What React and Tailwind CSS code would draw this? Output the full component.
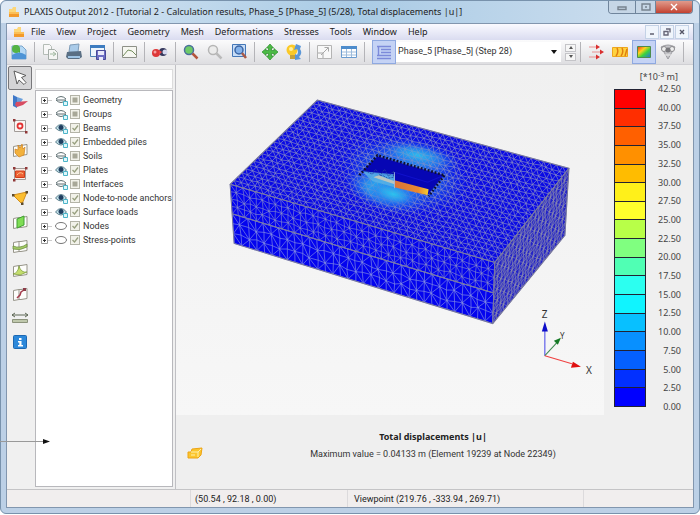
import React from "react";

/* ---------- finite element model ---------- */

const TOP = [[317, 100], [568, 168], [494, 262], [230, 184]];
const FRONT = [[230, 184], [494, 262], [492, 323], [234, 243]];
const SIDE = [[494, 262], [568, 168], [564, 235], [492, 323]];

function noise(i, j) {
  const v = Math.sin(i * 127.1 + j * 311.7) * 43758.5453;
  return v - Math.floor(v) - 0.5;
}

function meshPath(quad, cols, rows, jitter, cross) {
  const at = (i, j) => {
    const inner = i > 0 && j > 0 && i < cols && j < rows;
    const u = (i + (inner ? noise(i, j) * jitter : 0)) / cols;
    const v = (j + (inner ? noise(j + 9, i + 4) * jitter : 0)) / rows;
    return [0, 1].map(
      (k) =>
        (1 - u) * (1 - v) * quad[0][k] +
        u * (1 - v) * quad[1][k] +
        u * v * quad[2][k] +
        (1 - u) * v * quad[3][k]
    );
  };
  const line = (a, b) =>
    `M${a[0].toFixed(1)} ${a[1].toFixed(1)}L${b[0].toFixed(1)} ${b[1].toFixed(1)}`;
  let d = "";
  for (let j = 0; j <= rows; j++) {
    for (let i = 0; i <= cols; i++) {
      if (i < cols) d += line(at(i, j), at(i + 1, j));
      if (j < rows) d += line(at(i, j), at(i, j + 1));
      if (i < cols && j < rows) {
        const even = (i + j) % 2 === 0;
        if (!cross || even) d += line(at(i, j), at(i + 1, j + 1));
        else d += line(at(i + 1, j), at(i, j + 1));
      }
    }
  }
  return d;
}

const lerp = (a, b, t) => [a[0] + (b[0] - a[0]) * t, a[1] + (b[1] - a[1]) * t];
const pts = (quad) => quad.map((p) => p.join(",")).join(" ");

const FL = lerp(FRONT[0], FRONT[3], 0.5);
const FR = lerp(FRONT[1], FRONT[2], 0.5);
const topMesh = meshPath(TOP, 40, 22, 0.3, false);
const frontUpper = meshPath([FRONT[0], FRONT[1], FR, FL], 42, 4, 0.3, true);
const frontLower = meshPath([FL, FR, FRONT[2], FRONT[3]], 34, 3, 0.3, true);
const sideMesh = meshPath(SIDE, 20, 10, 0.3, true);

function Model() {
  return (
    <svg viewBox="176 65 427 349" className="block w-full" role="img" aria-label="Total displacements model">
      <defs>
        <radialGradient id="heat">
          <stop offset="0" stopColor="#2cc9ee" />
          <stop offset="0.5" stopColor="#2a96ee" stopOpacity="0.8" />
          <stop offset="1" stopColor="#1030f4" stopOpacity="0" />
        </radialGradient>
        <linearGradient id="beam">
          <stop offset="0" stopColor="#d9733a" />
          <stop offset="0.7" stopColor="#e88a30" />
          <stop offset="1" stopColor="#f5cf30" />
        </linearGradient>
      </defs>
      <polygon points={pts(TOP)} fill="#0a0ae4" />
      <ellipse cx="404" cy="174" rx="68" ry="40" fill="url(#heat)" opacity="0.7" transform="rotate(12 404 174)" />
      <ellipse cx="418" cy="156" rx="44" ry="15" fill="url(#heat)" opacity="0.85" transform="rotate(12 418 156)" />
      <ellipse cx="386" cy="190" rx="44" ry="22" fill="url(#heat)" transform="rotate(16 386 190)" />
      <path d={topMesh} stroke="#9094c0" strokeWidth="0.8" opacity="0.8" fill="none" />
      <ellipse cx="383" cy="189" rx="38" ry="17" fill="url(#heat)" opacity="0.5" transform="rotate(14 383 189)" />
      <ellipse cx="393" cy="194" rx="24" ry="11" fill="url(#heat)" opacity="0.8" transform="rotate(14 393 194)" />
      <ellipse cx="416" cy="154" rx="34" ry="10" fill="url(#heat)" opacity="0.4" transform="rotate(10 416 154)" />
      <polygon points="377,156 443,175 427,195 394,186 394,176 362,171" fill="#0606b4" />
      <path d="M394 172 427 182 441 176" stroke="#1010cc" strokeWidth="1" fill="none" />
      <polygon points="362,171 394,174 394,187 372,181" fill="#58b4e6" opacity="0.75" />
      <path d="m364 170 8 4 3-5 5 6 4-6 4 7 5-5v6l-6 1-5-3-6 1" fill="none" stroke="#23409c" strokeWidth="0.8" strokeDasharray="2 1" />
      <path d="m373 177 21 7v-3l-16-6z" fill="#b9c4bf" />
      <polygon points="394,180 428,189 427,195 394,187" fill="url(#beam)" />
      <path d="m359 175 18-20 67 20-16 21" fill="none" stroke="#10102c" strokeWidth="2.4" strokeDasharray="1.8 1.8" />
      <path d="M394 172v16" stroke="#a8bfe0" strokeWidth="0.8" />

      <polygon points={pts(FRONT)} fill="#0404ee" />
      <path d={frontUpper} stroke="#8f95c8" strokeWidth="0.7" opacity="0.85" fill="none" />
      <path d={frontLower} stroke="#8c98e0" strokeWidth="0.7" opacity="0.9" fill="none" />
      <polygon points={pts(SIDE)} fill="#2222c8" />
      <path d={sideMesh} stroke="#9090ac" strokeWidth="0.8" opacity="0.8" fill="none" />
      <path
        d={`M230 184 317 100 568 168 494 262ZM230 184 234 243 492 323 564 235 568 168M494 262 492 323M${FL} ${FR}`}
        fill="none"
        stroke="#77779c"
        strokeWidth="1"
      />

      <g fontFamily="'Noto Sans','Liberation Sans',sans-serif" fill="#333">
        <text x="541" y="317" fontSize="10">Z</text>
        <text x="559" y="338" fontSize="8">Y</text>
        <text x="585" y="373" fontSize="10">X</text>
      </g>
      <path d="M544 355V330" stroke="#4444e8" />
      <path d="m544 321 3 10h-6z" fill="#0c0cc8" />
      <path d="m544 355 12-13" stroke="#3d8a50" />
      <path d="m560 337-3 7-4-4z" fill="#167a26" />
      <path d="m544 355 27 8" stroke="#f04040" />
      <path d="m580 366-10 1 2-6z" fill="#e01010" />
    </svg>
  );
}

/* ---------- icons ---------- */

function Ico({ children, className = "h-[18px] w-[18px]" }) {
  return (
    <svg viewBox="0 0 18 18" fill="none" aria-hidden="true" className={className}>
      {children}
    </svg>
  );
}

const Page = () => <path d="M2.5 5.500 8 4.500v10l-5.500 1zM8 4.500h2l6-1v10l-6 1H8" fill="#fdfdfb" stroke="#97958a" />;

const icons = {
  open: <Ico><path d="M2 3h10l4 4v9H2z" fill="#b4d8f4" stroke="#7aa5cc" /><path d="M2 12q7-5 14 0v4H2z" fill="#4d94d6" /><path d="m3 3 7 7V6l-3-4z" fill="#3ea834" /><circle cx="6" cy="6" r="4" fill="#55b445" /></Ico>,
  copy: <Ico><path d="M2.500 1.500h6l2 2v8h-8z" fill="#f8f8f8" stroke="#b4bcb6" /><path d="M7.500 6.500h6l3 3v7h-9z" fill="#f5f6f4" stroke="#a5ada8" /><path d="M9 11h5m-2-2 3 2-3 2" stroke="#a0b8a0" /></Ico>,
  print: <Ico><path d="m5 2 9-1-1 8H4z" fill="#aacbe9" stroke="#7f9cb8" /><path d="m2 9 14-1 1 6-3 2H3l-2-2z" fill="#5a6f84" /><path d="M3 13h12v2H3z" fill="#9fc4e4" /></Ico>,
  save: <Ico><path d="M1.500 2.500h14v11h-14z" fill="#eef5fc" stroke="#4d7fb5" /><path d="M1 2h15v3H1z" fill="#3d7cc0" /><path d="M7.500 7.500h9v9h-9z" fill="#6d6ec4" stroke="#4a4a98" /><path d="M9 8h6v4H9zM10 14h4v3h-4z" fill="#e9e9fa" /></Ico>,
  chart: <Ico><path d="M2.500 3.500h14v11h-14z" fill="#f6f7f1" stroke="#8d9087" /><path d="m3 13 5-6 4 1 4 4" stroke="#779060" /></Ico>,
  curve: <Ico><circle cx="5" cy="10" r="4" fill="#dd3838" /><circle cx="4" cy="9" r="1.500" fill="#f5a0a0" /><circle cx="12" cy="9" r="4" fill="#34375c" /><circle cx="14" cy="9" r="2.500" fill="#d5d9ee" /><path d="m8 7 3 2-3 3z" fill="#e84848" /></Ico>,
  zoomIn: <Ico><circle cx="7" cy="7" r="4.500" fill="#6ecb68" stroke="#4a6f9c" strokeWidth="1.500" /><path d="m10.500 10.500 5 5" stroke="#b4553c" strokeWidth="2.500" /></Ico>,
  zoomOut: <Ico><circle cx="7" cy="7" r="4.500" fill="#ececec" stroke="#b5b5b5" strokeWidth="1.500" /><path d="m10.500 10.500 5 5" stroke="#bababa" strokeWidth="2.500" /></Ico>,
  zoomBox: <Ico><path d="M2.500 1.500h13v12h-13z" fill="#c8ddf6" stroke="#4477b8" /><circle cx="9" cy="7" r="4" fill="#84b2ea" stroke="#3a64a4" strokeWidth="1.500" /><path d="m12 10 4 5" stroke="#a85a48" strokeWidth="2.500" /></Ico>,
  move: <Ico><path d="m9 1 3.500 4h-2v2.500H13v-2L17 9l-4 3.500v-2h-2.500V13h2L9 17l-3.500-4h2v-2.500H5v2L1 9l4-3.500v2h2.500V5h-2z" fill="#4cba46" stroke="#2e8e2c" strokeWidth="0.700" /></Ico>,
  rotate: <Ico><circle cx="7" cy="7" r="5.500" fill="#fbc928" /><path d="M5 12h5v4H5z" fill="#c7a23b" /><path d="m11 1 5 2-1 3q3 4-1 8l2 2-6 1V11l2 1q2-3 0-6l-3 1z" fill="#5b97d8" /><circle cx="6" cy="6" r="2" fill="#fff0a0" /></Ico>,
  scale: <Ico><path d="M1.500 2.500h14v13h-14z" fill="#f8f8f8" stroke="#b4b4b4" /><path d="m5 12 7-7M8.500 4.500h4v4M2 10h5v5" stroke="#a8a8a8" /></Ico>,
  table: <Ico><path d="M1.500 3.500h15v11h-15z" fill="#fff" stroke="#6a9cd0" /><path d="M1 3h16v3H1z" fill="#4d8ccc" /><path d="M2 9h14M2 12h14M6.500 6v8M11.500 6v8" stroke="#9dbcdc" /></Ico>,
  tree: <Ico><path d="M2 3.500h14M6 6.500h10M6 9.500h10M2 12.500h14M2 15.500h14M3.500 3v9" stroke="#7c8ada" strokeWidth="1.400" /></Ico>,
  arrows: <Ico><path d="M2 4h8M5 9h9M2 14h8" stroke="#e89090" /><path d="m9 1.500 4 2.500-4 2.500zM13 6.500 17 9l-4 2.500zM9 11.500l4 2.500-4 2.500z" fill="#d93030" /></Ico>,
  contour: <Ico><path d="M1.500 4.500h15v9h-15z" fill="#ffd33f" stroke="#eda61e" /><path d="M5 13q3-4 1-8M10 13q3-4 1-8M14 13l2-7" stroke="#e07d10" strokeWidth="1.500" /></Ico>,
  shading: (
    <Ico>
      <defs><linearGradient id="rainbow" x1="0" y1="0" x2="1" y2="1"><stop stopColor="#f02c18" /><stop offset="0.350" stopColor="#ffd21c" /><stop offset="0.600" stopColor="#3cd43c" /><stop offset="1" stopColor="#2470e8" /></linearGradient></defs>
      <path d="M2.500 3.500h13v11h-13z" fill="url(#rainbow)" stroke="#4c8c4c" />
    </Ico>
  ),
  iso: <Ico><path d="m2 4 7 12 7-12q-7-4-14 0z" fill="#c4c4c8" stroke="#9d9da2" /><circle cx="5" cy="6" r="2.500" fill="#eee" stroke="#88888c" /><circle cx="13" cy="6" r="2.500" fill="#eee" stroke="#88888c" /><circle cx="9" cy="7" r="2.500" fill="#77777c" /><path d="M6 12h6" stroke="#eee" /></Ico>,
  pointer: <Ico><path d="m3 2 12 4.500-4.500 2 4.500 5-2 2-5-4.500-2 4z" fill="#fff" stroke="#5c5c5c" /></Ico>,
  axes: <Ico><path d="m2 2 4 2v11l-4-2z" fill="#3f78c8" /><path d="m6 4 6 2-2 3-4 2z" fill="#6ba0dc" /><path d="m4 12 1-3 12-1-5 4-6 2z" fill="#d84c62" /></Ico>,
  node: <Ico><path d="M3.500 3.500h11v11h-11z" fill="#faf7f5" stroke="#a29c98" /><circle cx="9" cy="9" r="2.500" stroke="#e23434" strokeWidth="1.800" /><path d="M2 2h2.500v2.500H2zM14 14h2.500v2.500H14z" fill="#903838" /></Ico>,
  hand: <Ico><Page /><path d="m4 8 3 1V4l2 3 2-4 1 5 2-2-1 8-5 2-4-4z" fill="#f2b13c" stroke="#ce8322" strokeWidth="0.700" /></Ico>,
  region: <Ico><path d="M3.500 3.500h11v11h-11z" fill="#fbeee6" stroke="#a49c98" /><path d="M4.500 6h9v6.500h-9z" fill="#ee6234" stroke="#d03c18" /><path d="M6 10q3-4 6-1" stroke="#ffc48c" /><path d="M2 2h2.500v2.500H2zM14 2h2.500v2.500H14zM2 14h2.500v2.500H2z" fill="#903838" /></Ico>,
  triangle: <Ico><path d="m2 6 14-3-5 12z" fill="#fbbe30" stroke="#d28e1e" /><path d="M1 5h2.500v2.500H1zM14.500 2H17v2.500h-2.500zM10 13.500h2.500V16H10z" fill="#5c4a2c" /></Ico>,
  plane: <Ico><Page /><path d="m6 6 7-3v9l-7 3z" fill="#7fdd54" stroke="#41a032" /></Ico>,
  line: <Ico><Page /><path d="M2 9q7 3 14-2v3q-7 4-14 2z" fill="#a5cc66" stroke="#66883e" strokeWidth="0.700" /></Ico>,
  peak: <Ico><Page /><path d="M2 13q5-1 6-8 2 7 8 6l-7 3z" fill="#c3dd6c" stroke="#789838" strokeWidth="0.700" /></Ico>,
  section: <Ico><Page /><path d="m6 13 3-3 1-3 3-2" stroke="#a43c4c" strokeWidth="1.500" /><path d="M12 3h3v3h-3z" fill="#8c3c48" /></Ico>,
  ruler: <Ico><path d="M1 6h16M4 4 1 6l3 2M14 4l3 2-3 2" stroke="#5d6755" /><path d="M1.500 10.500h15v3h-15z" fill="#bfc8ac" stroke="#8c937c" /></Ico>,
  info: <Ico><rect x="2.500" y="2.500" width="13" height="13" rx="1" fill="#2c88da" stroke="#1d68b2" /><path d="M8 5h2.500v2H8zM7 8h3.500v4H12v1.500H7V12h1.300V9.500H7z" fill="#fff" /></Ico>,
};

function Logo() {
  return (
    <svg viewBox="0 0 12 12" className="h-3 w-3 shrink-0" aria-hidden="true">
      <path d="M1 3h3l1-2h3v6H1z" fill="#fcd77a" />
      <path d="M1 6h10v5H1z" fill="#f39a2c" />
      <path d="M1 6h10v2H1z" fill="#fbbf58" />
    </svg>
  );
}

/* ---------- tool bars ---------- */

const Sep = () => <span className="mx-[3px] h-5 w-px shrink-0 bg-[#b4b4b8]" />;

function Tool({ name, label, on }) {
  return (
    <button
      type="button"
      aria-label={label}
      aria-pressed={on}
      className={
        "flex h-6 w-6 shrink-0 items-center justify-center " +
        (on ? "border border-[#8fa9e0] bg-[#c5d3f5]" : "")
      }
    >
      {icons[name]}
    </button>
  );
}

function TopTools() {
  return (
    <div className="flex h-[25px] items-center border-b border-[#d0d0d4] bg-linear-to-b from-[#fbfbfc] to-[#dedee1]">
      <Tool name="open" label="Open" />
      <Sep />
      <Tool name="copy" label="Copy" />
      <Tool name="print" label="Print" />
      <Tool name="save" label="Save view" />
      <Sep />
      <Tool name="chart" label="Report" />
      <Sep />
      <Tool name="curve" label="Curves" />
      <Sep />
      <Tool name="zoomIn" label="Zoom in" />
      <Tool name="zoomOut" label="Zoom out" />
      <Tool name="zoomBox" label="Zoom window" />
      <Sep />
      <Tool name="move" label="Move" />
      <Tool name="rotate" label="Rotate" />
      <Sep />
      <Tool name="scale" label="Scale" />
      <Tool name="table" label="Table" />
      <Sep />
      <div className="ml-1 flex">
        <Tool name="tree" label="Model explorer" on />
      </div>
      <div className="relative h-5 min-w-0 flex-1 bg-white">
        <select aria-label="Phase" className="block h-[18px] w-full appearance-none bg-white py-0 pl-[2px] pr-4 font-['Roboto','Liberation_Sans',sans-serif] text-[9px] leading-[18px] text-[#333] outline-none">
          <option>Phase_5 [Phase_5] (Step 28)</option>
        </select>
        <svg viewBox="0 0 6 4" className="pointer-events-none absolute right-1 top-2 h-1 w-1.5" aria-hidden="true">
          <path d="M0 0h6L3 4z" fill="#111" />
        </svg>
      </div>
      <div className="ml-1 mr-px flex w-[11px] shrink-0 flex-col gap-px">
        <button type="button" aria-label="Next step" className="flex h-2 items-center justify-center border border-[#c4c4c8] bg-[#f6f6f6]">
          <svg viewBox="0 0 4 3" className="h-[3px] w-1"><path d="M2 0l2 3H0z" fill="#555" /></svg>
        </button>
        <button type="button" aria-label="Previous step" className="flex h-2 items-center justify-center border border-[#c4c4c8] bg-[#f6f6f6]">
          <svg viewBox="0 0 4 3" className="h-[3px] w-1"><path d="M0 0h4L2 3z" fill="#555" /></svg>
        </button>
      </div>
      <Sep />
      <Tool name="arrows" label="Arrows" />
      <Tool name="contour" label="Contour lines" />
      <Tool name="shading" label="Shadings" on />
      <Tool name="iso" label="Iso surfaces" />
      <Sep />
      <span className="w-[6px] shrink-0" />
    </div>
  );
}

const sideTools = [
  ["pointer", "Select"], ["axes", "Axes"], ["node", "Select nodes"], ["hand", "Drag window"],
  ["region", "Select region"], ["triangle", "Select elements"], ["plane", "Cross section"],
  ["line", "Line section"], ["peak", "Peak"], ["section", "Section curve"],
  ["ruler", "Distance"], ["info", "Information"],
];

function SideTools() {
  return (
    <div className="flex w-[27px] shrink-0 flex-col items-start pt-px">
      {sideTools.map(([name, label], i) => (
        <button
          key={name}
          type="button"
          aria-label={label}
          className={
            "flex h-6 w-6 items-center justify-center " +
            (i === 0 ? "rounded-xs border border-[#77777a] bg-[#d4d4d6]" : "")
          }
        >
          {icons[name]}
        </button>
      ))}
    </div>
  );
}

/* ---------- explorer ---------- */

const items = [
  ["Geometry", "half"], ["Groups", "half"], ["Beams", "open"], ["Embedded piles", "open"],
  ["Soils", "half"], ["Plates", "open"], ["Interfaces", "half"], ["Node-to-node anchors", "open"],
  ["Surface loads", "open"], ["Nodes", "none"], ["Stress-points", "none"],
];

function Eye({ kind }) {
  return (
    <svg viewBox="0 0 13 12" className="h-3 w-[13px]" fill="none" aria-hidden="true">
      {kind === "none" && <ellipse cx="6" cy="6" rx="5.500" ry="3.500" fill="#fff" stroke="#777" />}
      {kind === "half" && <path d="M1 5q5-5 10 0M1 6q5 5 10 0M1 6h10" stroke="#5c6d70" />}
      {kind === "open" && (
        <>
          <path d="M0.500 6q5.500-7 11 0-5.500 6-11 0z" fill="#c4e2ea" stroke="#5a7e8c" />
          <circle cx="6" cy="5.500" r="2.500" fill="#1f3f60" />
        </>
      )}
      {kind !== "none" && <path d="M8.500 7.500h4v4h-4z" fill="#dff6fa" stroke="#4cb4c8" />}
    </svg>
  );
}

function Explorer() {
  return (
    <div className="flex w-[138px] shrink-0 flex-col pb-[2px]">
      <input aria-label="Filter" className="mt-1 h-5 w-full border border-[#dcdcdc] bg-white px-1 text-[9px] outline-none" />
      <ul className="mt-px grid flex-1 auto-rows-[14px] content-start border border-[#b8b8bc] bg-white pl-[5px] pt-[2px] font-['Roboto','Liberation_Sans',sans-serif] text-[9px] leading-[14px] text-[#333]">
        {items.map(([name, kind]) => (
          <li key={name} className="flex items-center">
            <button type="button" aria-label={"Expand " + name} className="h-[7px] w-[7px]">
              <svg viewBox="0 0 7 7" className="block h-[7px] w-[7px]"><path d="M.5.500h6v6h-6z" fill="#fff" stroke="#999" /><path d="M2 3.500h3M3.500 2v3" stroke="#333" /></svg>
            </button>
            <span className="mr-[3px] h-px w-1 bg-[#ccc]" />
            <Eye kind={kind} />
            <label className="ml-[2px] flex items-center gap-[3px] whitespace-nowrap">
              <input
                type="checkbox"
                defaultChecked={kind !== "half"}
                className="peer h-[10px] w-[10px] appearance-none border border-[#b4b4a8] bg-[#f2f2ea]"
              />
              <svg viewBox="0 0 10 10" className="pointer-events-none -ml-[13px] h-[10px] w-[10px]" aria-hidden="true">
                {kind === "half" ? <path d="M2.500 2.500h5v5h-5z" fill="#a8a898" /> : <path d="m2.500 5 2 2 3.500-4.500" fill="none" stroke="#98a080" strokeWidth="1.300" />}
              </svg>
              {name}
            </label>
          </li>
        ))}
      </ul>
    </div>
  );
}

/* ---------- legend ---------- */

const bands = [
  "bg-[#ff0000]", "bg-[#ff2e00]", "bg-[#ff6000]", "bg-[#ff9000]", "bg-[#ffbc00]", "bg-[#fff01a]",
  "bg-[#ffff2c]", "bg-[#b8ff48]", "bg-[#80ff80]", "bg-[#50ffb4]", "bg-[#2cfff0]", "bg-[#10f4ff]",
  "bg-[#08c0ff]", "bg-[#0890ff]", "bg-[#0460ff]", "bg-[#0230ff]", "bg-[#0000ff]",
];

function Legend() {
  return (
    <div className="w-[89px] shrink-0 pt-[6px] text-[9px] leading-3 text-[#444]">
      <div className="pr-[15px] text-right">
        [*10<sup className="text-[7px]">-3</sup> m]
      </div>
      <div className="flex h-[330px] justify-between pl-[10px] pr-3">
        <div className="my-[6px] flex w-8 flex-col divide-y divide-[#223] border border-[#223]">
          {bands.map((b) => (
            <div key={b} className={"flex-1 " + b} />
          ))}
        </div>
        <div className="flex flex-col justify-between text-right">
          {bands.concat("end").map((b, i) => (
            <span key={b}>{(42.5 - i * 2.5).toFixed(2)}</span>
          ))}
        </div>
      </div>
    </div>
  );
}

/* ---------- window ---------- */

const menus = ["File", "View", "Project", "Geometry", "Mesh", "Deformations", "Stresses", "Tools", "Window", "Help"];

const Glyph = ({ d, color }) => (
  <svg viewBox="0 0 10 8" className="h-2 w-2.5" fill="none" aria-hidden="true">
    <path d={d} stroke={color} strokeWidth="1.400" />
  </svg>
);

export default function App() {
  return (
    <div className="relative flex min-h-screen flex-col bg-white pb-px font-['Noto_Sans','Liberation_Sans',sans-serif]">
      <div className="flex flex-1 flex-col rounded-md border border-[#7892ac] bg-[#bcd0e6] px-[5px] pb-[5px]">
        <header className="-mx-[5px] flex h-[22px] items-center rounded-t-md bg-linear-to-r from-[#dfeaf5] via-[#a9cbe5] to-[#d3e1f0] pl-[7px] pr-[6px]">
          <Logo />
          <h1 className="ml-1 flex-1 whitespace-nowrap text-[9px] text-[#222]">
            PLAXIS Output 2012 - [Tutorial 2 - Calculation results, Phase_5 [Phase_5] (5/28), Total displacements |u|]
          </h1>
          <div className="flex h-[13px] self-start overflow-hidden rounded-b-sm border border-t-0 border-[#70859c]">
            <button type="button" aria-label="Minimize" className="flex w-[27px] items-center justify-center border-r border-[#70859c] bg-[#c6d6e6]"><Glyph d="M1 4h8v2.500H1z" color="#77828e" /></button>
            <button type="button" aria-label="Maximize" className="flex w-[20px] items-center justify-center border-r border-[#70859c] bg-[#c6d6e6]"><Glyph d="M1 1h8v6H1zM4 4h2" color="#77828e" /></button>
            <button type="button" aria-label="Close" className="flex w-[36px] items-center justify-center bg-linear-to-b from-[#e09a8c] to-[#c24030]"><Glyph d="m2 1 6 6M8 1 2 7" color="#fff" /></button>
          </div>
        </header>

        <div className="flex flex-1 flex-col border border-[#8296ae] bg-[#f0f0f0]">
          <nav className="flex h-4 items-center bg-linear-to-b from-[#fafaff] to-[#dadcf0] pl-[6px] text-[9px] text-[#222]">
            <Logo />
            <div className="ml-[6px] flex flex-1 gap-[11px]">
              {menus.map((m) => (
                <button key={m} type="button">{m}</button>
              ))}
            </div>
            <div className="flex gap-px pr-1">
              <button type="button" aria-label="Minimize document" className="flex h-[14px] w-[14px] items-center justify-center border border-[#c4d2e6] bg-[#f0f5fc]"><Glyph d="M3 6h4" color="#556" /></button>
              <button type="button" aria-label="Restore document" className="flex h-[14px] w-[14px] items-center justify-center border border-[#c4d2e6] bg-[#f0f5fc]"><Glyph d="M4 1h4v3.500M2 3.500h4V7H2z" color="#667" /></button>
              <button type="button" aria-label="Close document" className="flex h-[14px] w-[14px] items-center justify-center border border-[#c4d2e6] bg-[#f0f5fc]"><Glyph d="m3 2 4 4M7 2 3 6" color="#556" /></button>
            </div>
          </nav>
          <TopTools />

          <div className="flex flex-1 pl-px">
            <SideTools />
            <Explorer />
            <main className="ml-[2px] flex min-w-0 flex-1 flex-col border-l border-[#c0c0c4] bg-[#efefef]">
              <div className="flex">
                <div className="min-w-0 flex-1 bg-linear-to-b from-[#f0f0f0] to-[#f7f7f7]">
                  <Model />
                </div>
                <Legend />
              </div>
              <div className="flex flex-1 items-start pt-[14px] text-[#333]">
                <svg viewBox="0 0 16 12" className="ml-[11px] mt-[18px] h-3 w-4" aria-hidden="true">
                  <path d="M1 5h3l1-3 10-1-1 7-3 3H1z" fill="#fbc52e" stroke="#eda414" />
                  <path d="M4 5h7l3-3M11 5v5M4 8h4" stroke="#fff0a8" fill="none" />
                </svg>
                <div className="mr-[30px] flex-1 text-center font-['Roboto','Liberation_Sans',sans-serif]">
                  <h2 className="font-['Noto_Sans',sans-serif] text-[9px] font-bold leading-4 text-[#222]">Total displacements |u|</h2>
                  <p className="text-[9px] leading-[18px]">Maximum value = 0.04133 m (Element 19239 at Node 22349)</p>
                </div>
              </div>
            </main>
          </div>

          <footer className="flex h-[18px] items-stretch border-t border-[#c4c4c6] bg-[#f1eeee] font-['Roboto','Liberation_Sans',sans-serif] text-[9px] leading-[19px] text-[#222]">
            <span className="w-[184px] shrink-0 border-r border-[#dcdadc]" />
            <span className="w-[157px] shrink-0 border-r border-[#dcdadc] pl-1">(50.54 , 92.18 , 0.00)</span>
            <span className="w-[236px] shrink-0 border-r border-[#dcdadc] pl-[6px]">Viewpoint (219.76 , -333.94 , 269.71)</span>
          </footer>
        </div>
      </div>

      <svg viewBox="0 0 50 6" className="absolute left-0 top-[438px] h-[6px] w-[50px]" aria-hidden="true">
        <path d="M0 3.500h44" stroke="#999" />
        <path d="M43 1v5l7-2.500z" fill="#111" />
      </svg>
    </div>
  );
}
